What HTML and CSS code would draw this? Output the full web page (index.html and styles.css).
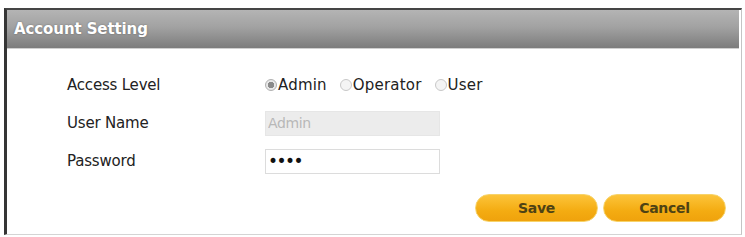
FILE: index.html
```html
<!DOCTYPE html>
<html lang="en">
<head>
    <meta charset="UTF-8">
    <title>Account Setting</title>
    <link rel="stylesheet" href="styles.css">
</head>
<body>
<div class="panel">
    <div class="panel-head">Account Setting</div>
    <form class="account-form">
        <div class="row">
            <label class="label">Access Level</label>
            <div class="field radios">
                <label class="radio"><input type="radio" name="level" checked>Admin</label>
                <label class="radio"><input type="radio" name="level">Operator</label>
                <label class="radio"><input type="radio" name="level">User</label>
            </div>
        </div>
        <div class="row">
            <label class="label">User Name</label>
            <div class="field"><input class="text-input" type="text" value="Admin" disabled></div>
        </div>
        <div class="row">
            <label class="label">Password</label>
            <div class="field"><input class="text-input pass" type="password" value="1234"></div>
        </div>
        <div class="actions">
            <button type="button" class="pill-btn">Save</button>
            <button type="button" class="pill-btn">Cancel</button>
        </div>
    </form>
</div>
</body>
</html>
```

FILE: styles.css
```css
body {
    margin: 0;
    background: #fff;
    font-family: "DejaVu Sans", Verdana, sans-serif;
}
.panel {
    margin: 8px 3px 0 4px;
    height: 227px;
    box-sizing: border-box;
    border-top: 2px solid #454545;
    border-left: 3px solid #353535;
    border-right: 1px solid #c4c4c4;
    border-bottom: 1px solid #d4d4d4;
}
.panel-head {
    height: 38px;
    line-height: 38px;
    padding-left: 7px;
    margin-right: 2px;
    background: linear-gradient(#b4b4b4, #a2a2a2 45%, #7c7c7c);
    border-bottom: 1px solid #cfcfcf;
    color: #fff;
    font-weight: bold;
    font-size: 15px;
    letter-spacing: -0.1px;
    text-shadow: 0 0 2px rgba(0,0,0,0.35);
}
.account-form {
    padding: 17px 0 0 60px;
}
.row {
    display: flex;
    align-items: center;
    height: 38px;
}
.label {
    width: 198px;
    font-size: 15px;
    color: #222;
    letter-spacing: -0.2px;
}
.field {
    display: flex;
    align-items: center;
}
.radios {
    gap: 13px;
    font-size: 15px;
    color: #222;
    letter-spacing: 0.2px;
}
.radio {
    display: flex;
    align-items: center;
}
.radio input {
    appearance: none;
    width: 12px;
    height: 12px;
    margin: 0 1px 0 0;
    border: 1px solid #c8c8c8;
    border-radius: 50%;
    background: #f4f4f4;
    box-sizing: border-box;
}
.radio input:checked {
    background: radial-gradient(circle, #8a8a8a 0 3px, #e8e8e8 3.5px);
    border-color: #b0b0b0;
}
.text-input {
    width: 175px;
    height: 25px;
    box-sizing: border-box;
    padding: 0 2px;
    border: 1px solid #dcdcdc;
    font-family: "DejaVu Sans", Verdana, sans-serif;
    font-size: 14px;
    letter-spacing: -0.4px;
    outline: none;
}
.text-input:disabled {
    background: #ececec;
    color: #b8b8b8;
    border-color: #e6e6e6;
}
.pass {
    background: #fff;
    color: #111;
    font-size: 17px;
    letter-spacing: -1.5px;
}
.actions {
    display: flex;
    justify-content: flex-end;
    gap: 5px;
    padding-right: 15px;
    margin-top: 14px;
}
.pill-btn {
    width: 123px;
    height: 28px;
    border: 1px solid #f7d36a;
    border-radius: 14px;
    background: linear-gradient(#fcc43a, #f4ac12 60%, #efa20c);
    color: #4e4214;
    font-family: "DejaVu Sans", Verdana, sans-serif;
    font-weight: bold;
    font-size: 14px;
    letter-spacing: -0.3px;
    cursor: pointer;
}
```
